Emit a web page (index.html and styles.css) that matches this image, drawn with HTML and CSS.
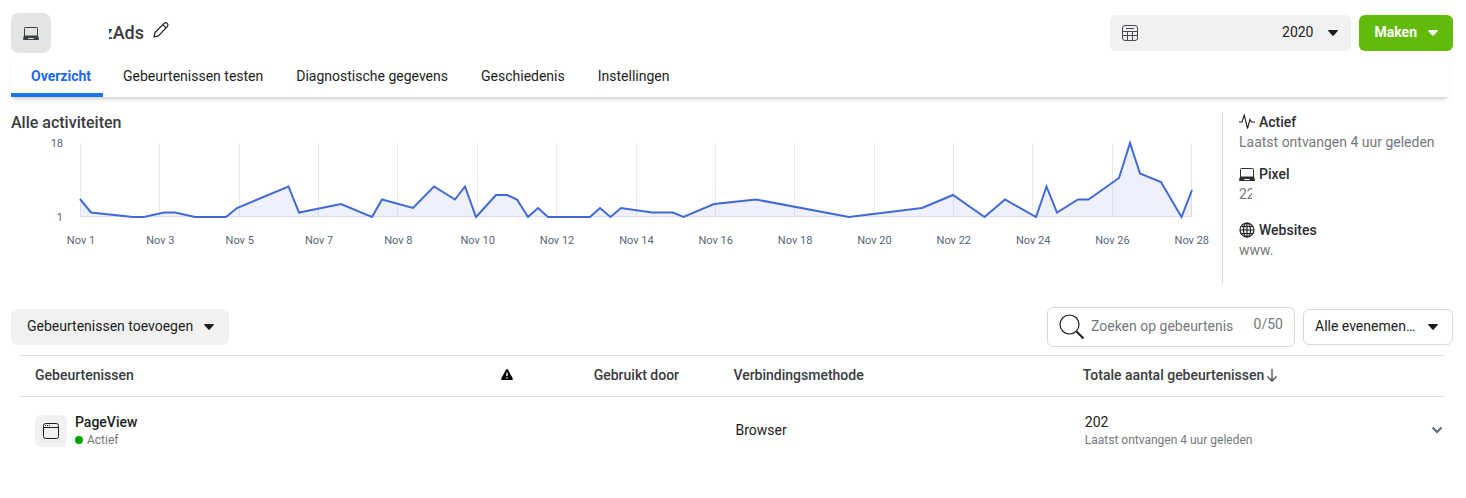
FILE: index.html
```html
<!DOCTYPE html>
<html lang="nl">
<head>
<meta charset="utf-8">
<meta name="viewport" content="width=device-width, initial-scale=1">
<title>Overzicht</title>
<link rel="stylesheet" href="styles.css">
</head>
<body>
<svg class="defs" aria-hidden="true">
  <symbol id="laptop" viewBox="0 0 16 14"><path fill="none" stroke="currentColor" d="M1.500 10V2.300Q1.500 1.500 2.300 1.500H13.700Q14.500 1.500 14.500 2.300V10"/><path fill="currentColor" fill-rule="evenodd" d="M1 9.500H15L16 13Q16 14 15 14H1Q0 14 0 13ZM5 12L5.500 13H10.500L11 12Z"/></symbol>
  <symbol id="caret" viewBox="0 0 10 6"><path fill="currentColor" d="M.7 0H9.300Q10.300 .3 9.700 1L5.700 5.600Q5 6.300 4.300 5.600L.3 1Q-.3 .3 .7 0Z"/></symbol>
</svg>

<header class="header">
  <div class="source-icon"><svg width="16" height="14"><use href="#laptop"/></svg></div>
  <h1 class="source-name"><span>zAds</span></h1>
  <button class="edit" aria-label="Naam bewerken">
    <svg width="18" height="18" viewBox="0 0 18 18" fill="none" stroke="#1c1e21" stroke-width="1.200" stroke-linejoin="round"><path d="M2 16L3 11.500L12.300 2.200Q13.700 .9 15.200 2.400Q16.700 3.900 15.500 5.300L6.500 14.800ZM10.800 3.700L14 6.900"/></svg>
  </button>
  <div class="actions">
    <button class="date" aria-label="Datumbereik 2020">
      <svg width="16" height="16" viewBox="0 0 16 16" fill="none" stroke="#444950"><rect x=".5" y=".5" width="15" height="15" rx="2.500"/><path d="M4 3.500H12M1 6.500H15M1 10.500H15M5.500 6.500V15M10.500 6.500V15"/></svg>
      <span class="date-text">2020</span>
      <svg width="10" height="6"><use href="#caret"/></svg>
    </button>
    <button class="create"><span>Maken</span> <svg width="10" height="6"><use href="#caret"/></svg></button>
  </div>
</header>

<nav class="tabs">
  <a class="tab active" href="#overzicht" aria-current="page">Overzicht</a>
  <a class="tab" href="#testen">Gebeurtenissen testen</a>
  <a class="tab" href="#diagnostiek">Diagnostische gegevens</a>
  <a class="tab" href="#geschiedenis">Geschiedenis</a>
  <a class="tab" href="#instellingen">Instellingen</a>
</nav>

<main>
  <section class="overview">
    <div class="activity">
      <h2 class="heading">Alle activiteiten</h2>
      <div class="chart">
        <div class="y-axis"><span>18</span><span>1</span></div>
        <svg class="plot" viewBox="80 143 1112 74" preserveAspectRatio="none" role="img" aria-label="Activiteiten van 1 tot 28 november">
          <path class="grid" d="M80.500 143V217M159.500 143V217M239.500 143V217M318.500 143V217M397.500 143V217M477.500 143V217M556.500 143V217M636.500 143V217M715.500 143V217M794.500 143V217M874.500 143V217M953.500 143V217M1032.500 143V217M1112.500 143V217M1191.500 143V217M80 216.500H1192"/>
          <path class="area" d="M80 199L91 212.500L133 217H144L164 212.500H175L195 217H226L237 208L288.500 186.500L299 212.500L341 204L372 217L382 199.500L413 208L434 186.500L455 199.500L465 186.500L476 217L496 195H507L517 199.500L528 217L538 208L548 217H590L600 208L610.500 217L621 208L652 212.500H673L683.500 217L714 204L756 199.500L849 217L922 208L953 195L984.500 217L1005 199.500L1036 217L1046.500 186.500L1057 212.500L1078 199.500H1088.500L1119 178L1130 143L1140 173.500L1161 182L1181.500 217L1192 190V217H80Z"/>
          <path class="line" d="M80 199L91 212.500L133 217H144L164 212.500H175L195 217H226L237 208L288.500 186.500L299 212.500L341 204L372 217L382 199.500L413 208L434 186.500L455 199.500L465 186.500L476 217L496 195H507L517 199.500L528 217L538 208L548 217H590L600 208L610.500 217L621 208L652 212.500H673L683.500 217L714 204L756 199.500L849 217L922 208L953 195L984.500 217L1005 199.500L1036 217L1046.500 186.500L1057 212.500L1078 199.500H1088.500L1119 178L1130 143L1140 173.500L1161 182L1181.500 217L1192 190"/>
        </svg>
        <div class="x-axis"><span>Nov 1</span><span>Nov 3</span><span>Nov 5</span><span>Nov 7</span><span>Nov 8</span><span>Nov 10</span><span>Nov 12</span><span>Nov 14</span><span>Nov 16</span><span>Nov 18</span><span>Nov 20</span><span>Nov 22</span><span>Nov 24</span><span>Nov 26</span><span>Nov 28</span></div>
      </div>
    </div>
    <aside class="details">
      <div class="detail">
        <h3><svg width="16" height="16" viewBox="0 0 16 16" fill="none" stroke="#1c1e21" stroke-width="1.100"><path d="M0 8H3L5.300 1L8.500 14.500L11 5.500L12.500 8H16"/></svg>Actief</h3>
        <p>Laatst ontvangen 4 uur geleden</p>
      </div>
      <div class="detail pixel">
        <h3><svg width="16" height="14"><use href="#laptop"/></svg>Pixel</h3>
        <p class="pixel-id">22</p>
      </div>
      <div class="detail">
        <h3><svg width="16" height="16" viewBox="0 0 16 16" fill="none" stroke="#1c1e21" stroke-width="1.200"><circle cx="8" cy="8" r="7"/><ellipse cx="8" cy="8" rx="3.500" ry="7"/><path d="M8 1V15M1 8H15M2 4.500H14M2 11.500H14"/></svg>Websites</h3>
        <p>www.</p>
      </div>
    </aside>
  </section>

  <div class="toolbar">
    <button class="add"><span>Gebeurtenissen toevoegen</span> <svg width="10" height="6"><use href="#caret"/></svg></button>
    <label class="search">
      <svg width="26" height="26" viewBox="0 0 26 26" fill="none" stroke="#1c1e21"><circle cx="10.500" cy="10.500" r="9.500" stroke-width="1.200"/><path stroke-width="2" d="M17.500 17.500L24.500 24.500"/></svg>
      <input type="text" maxlength="50" placeholder="Zoeken op gebeurtenis" aria-label="Zoeken op gebeurtenis">
      <span class="count">0/50</span>
    </label>
    <div class="filter">
      <select aria-label="Filter evenementen"><option>Alle evenementen</option></select>
      <svg width="10" height="6"><use href="#caret"/></svg>
    </div>
  </div>

  <table class="events">
    <thead>
      <tr>
        <th class="col-event" scope="col">Gebeurtenissen</th>
        <th class="col-warning" scope="col" aria-label="Waarschuwingen"><svg width="12" height="11" viewBox="0 0 12 11"><path fill="#000" d="M5 .7Q6-.7 7 .7L11.800 9.500Q12 11 10.800 11H1.200Q0 11 .2 9.500Z"/><path stroke="#fff" stroke-width="1.400" d="M6 3.500V7M6 8.200V9.600"/></svg></th>
        <th class="col-used" scope="col">Gebruikt door</th>
        <th class="col-method" scope="col">Verbindingsmethode</th>
        <th scope="col"><button class="sort">Totale aantal gebeurtenissen<svg width="10" height="13" viewBox="0 0 10 13" fill="none" stroke="#444950" stroke-width="1.300"><path d="M5 0V12M.5 7.500L5 12L9.500 7.500"/></svg></button></th>
      </tr>
    </thead>
    <tbody>
      <tr>
        <td>
          <div class="event">
            <div class="event-icon"><svg width="16" height="16" viewBox="0 0 16 16" fill="none" stroke="#1c1e21"><rect x=".5" y=".5" width="15" height="15" rx="2"/><path d="M.5 4.500H15.500"/><path stroke-dasharray="1 1" d="M2 2.500H7"/></svg></div>
            <div class="event-text"><div class="event-name">PageView</div><div class="status">Actief</div></div>
          </div>
        </td>
        <td></td>
        <td></td>
        <td class="value">Browser</td>
        <td class="value">
          <div class="total">
            <div class="event-text"><div>202</div><div class="note">Laatst ontvangen 4 uur geleden</div></div>
            <button class="expand" aria-label="Details tonen"><svg width="12" height="8" viewBox="0 0 12 8" fill="none" stroke="#606770" stroke-width="2"><path d="M1.500 1.500L6 6L10.500 1.500"/></svg></button>
          </div>
        </td>
      </tr>
    </tbody>
  </table>
</main>
</body>
</html>
```
FILE: styles.css
```css
* { box-sizing: border-box; }
body {
  margin: 0;
  padding: 13px 13px 13px 11px;
  background: #fff;
  color: #1c1e21;
  font: 14px/20px Roboto, "Liberation Sans", sans-serif;
}
h1, h2, h3, p { margin: 0; font-weight: 500; }
p { font-weight: 400; }
button, input, select { margin: 0; border: 0; padding: 0; background: none; color: inherit; font: inherit; }
svg { display: block; flex: none; }
.defs { position: absolute; width: 0; height: 0; }

.header { display: flex; align-items: center; }
.source-icon {
  display: grid;
  place-items: center;
  width: 40px;
  height: 40px;
  border-radius: 8px;
  background: #e4e4e4;
  color: #3b4049;
}
.source-name {
  display: flex;
  justify-content: flex-end;
  width: 35px;
  margin-left: 58px;
  overflow: hidden;
  color: #3a3b3f;
  font-size: 18px;
}
.edit { margin: 0 0 6px 8px; }
.actions { display: flex; gap: 8px; margin-left: auto; }
.date, .create, .add {
  display: flex;
  align-items: center;
  height: 36px;
  border-radius: 6px;
}
.date span, .create span, .add span { padding-bottom: 2px; }
.date { width: 241px; padding: 0 13px 0 12px; background: #f1f1f1; }
.date-text { margin: 0 14px 0 auto; }
.create { gap: 11px; padding: 0 15px 0 16px; background: #62bb0a; color: #fff; font-weight: 700; }

.tabs {
  display: flex;
  margin-right: 4px;
  box-shadow: 0 4px 4px -2px #ccc;
}
.tab {
  height: 44px;
  padding: 13px 13px 0 20px;
  color: inherit;
  text-decoration: none;
}
.tab.active { padding-right: 12px; border-bottom: 4px solid #1b74e8; color: #1b6af0; font-weight: 700; }

.overview { display: flex; margin-top: 15px; }
.activity { flex: 1; min-width: 0; }
.heading { padding-top: 1px; color: #3a3b3f; font-size: 16px; }
.chart {
  display: grid;
  grid-template-columns: 52px 1fr;
  column-gap: 17px;
  margin: 10px 30px 0 0;
  color: #5a6675;
  font-size: 11px;
  line-height: 16px;
}
.y-axis {
  display: flex;
  flex-direction: column;
  justify-content: space-between;
  margin: -7px 0 -9px;
  text-align: right;
}
.plot { width: 100%; height: 74px; overflow: visible; }
.plot path { fill: none; vector-effect: non-scaling-stroke; }
.plot .grid { stroke: #e9eaed; }
.plot .area { fill: rgba(66, 103, 218, .09); }
.plot .line { stroke: #4169d8; stroke-width: 2px; }
.x-axis { display: flex; grid-column: 2; justify-content: space-between; margin-top: 16px; padding-left: 1px; }
.x-axis span { display: flex; justify-content: center; width: 0; white-space: nowrap; }

.details {
  display: flex;
  flex-direction: column;
  gap: 12px;
  width: 231px;
  min-height: 171px;
  padding-left: 16px;
  border-left: 1px solid #d5d8dc;
}
.detail h3 { display: flex; align-items: center; gap: 4px; color: #2b2d31; font-size: 14px; }
.detail p { color: #75787d; white-space: nowrap; }
.detail.pixel { margin-bottom: 4px; }
.detail .pixel-id { width: 13px; overflow: hidden; }

.toolbar { display: flex; align-items: center; gap: 8px; margin-top: 24px; }
.add { gap: 11px; margin-right: auto; padding: 0 15px 0 16px; background: #f1f1f1; }
.search, .filter { border: 1px solid #d5d8dc; border-radius: 6px; }
.search { display: flex; align-items: center; width: 248px; height: 40px; padding: 0 11px; }
.search input { flex: 1; min-width: 0; margin: 0 8px 0 6px; padding-bottom: 2px; outline: 0; }
.search input::placeholder { color: #75787d; opacity: 1; }
.count { margin-bottom: 6px; color: #75787d; }
.filter { display: grid; grid-template-columns: 1fr; align-items: center; width: 150px; height: 36px; }
.filter select, .filter svg { grid-area: 1 / 1; }
.filter select {
  width: 100%;
  height: 34px;
  padding: 0 36px 2px 11px;
  appearance: none;
  overflow: hidden;
  text-overflow: ellipsis;
  white-space: nowrap;
}
.filter svg { justify-self: end; margin-right: 14px; pointer-events: none; }

.events {
  width: calc(100% - 16px);
  margin: 8px 8px 0;
  table-layout: fixed;
  border-collapse: collapse;
}
.events th {
  height: 41px;
  padding: 0 0 2px;
  border: solid #dddfe2;
  border-width: 1px 0;
  color: #3a3b3f;
  font-weight: 500;
  text-align: left;
}
.events td { height: 68px; padding: 0; }
.events th.col-event { width: 33.800%; padding-left: 16px; }
.events th.col-warning { width: 6.500%; padding-bottom: 4px; }
.col-used { width: 9.800%; }
.col-method { width: 24.500%; }
.sort { display: flex; align-items: center; gap: 3px; font-weight: 500; white-space: nowrap; }
.event { display: flex; align-items: center; gap: 8px; padding-left: 16px; }
.event-icon {
  display: grid;
  place-items: center;
  width: 32px;
  height: 32px;
  border-radius: 6px;
  background: #f1f1f1;
}
.event-text { padding-bottom: 1px; }
.event-name { font-weight: 500; }
.status, .note { color: #75787d; font-size: 12px; line-height: 16px; }
.status { display: flex; align-items: center; gap: 4px; }
.status::before { width: 8px; height: 8px; border-radius: 50%; background: #00a400; content: ""; }
.events td.value { padding: 0 0 1px 2px; }
.total { display: flex; align-items: center; justify-content: space-between; padding-right: 2px; }
```
